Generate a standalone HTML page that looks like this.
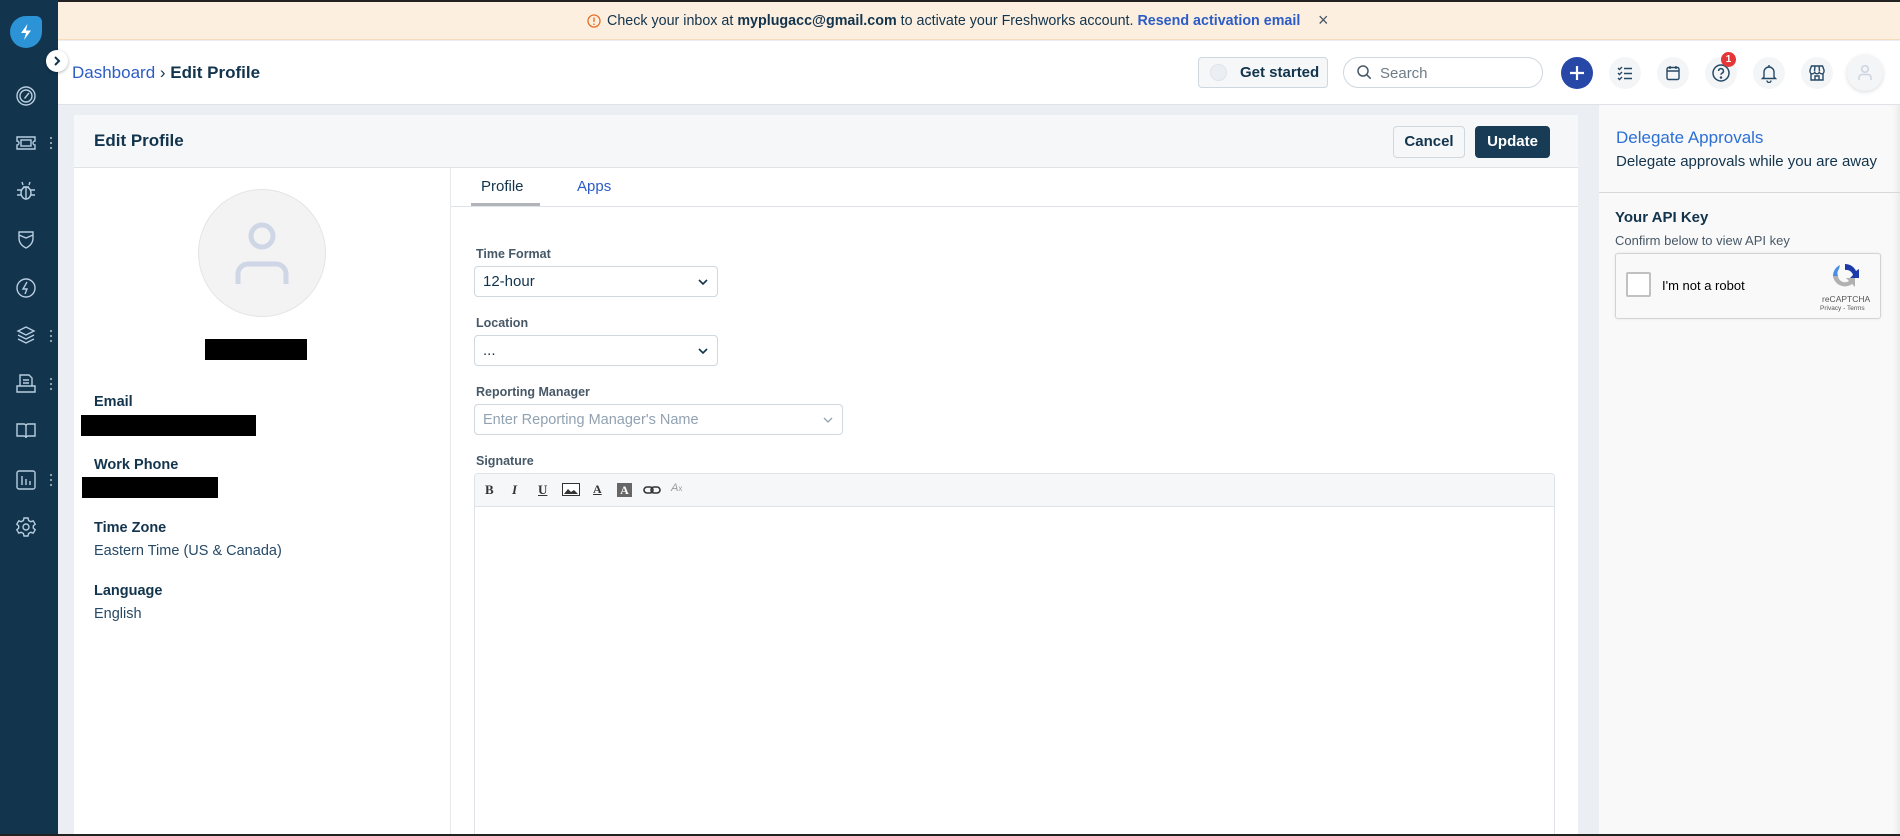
<!DOCTYPE html>
<html><head><meta charset="utf-8"><style>
*{box-sizing:border-box;margin:0;padding:0}
body{width:1900px;height:836px;overflow:hidden;background:#ebeff3;font-family:"Liberation Sans",sans-serif;color:#12344d;position:relative}
.a{position:absolute}
.sb{left:0;top:0;width:58px;height:836px;background:#12344d}
.ic{position:absolute;left:14px;width:24px;height:24px}
.dots{position:absolute;left:50px;width:3px}
.dots i{display:block;width:2px;height:2px;background:#b8c6d3;border-radius:1px;margin-bottom:3px}
.lbl{font-size:14.5px;font-weight:bold;color:#12344d}
.val{font-size:14.5px;color:#264966}
.flbl{font-size:12.5px;font-weight:bold;color:#475867}
.sel{position:absolute;border:1px solid #cfd7df;border-radius:4px;background:#fff;font-size:15px;padding-left:8px;display:flex;align-items:center}
.circ{position:absolute;top:57px;width:32px;height:32px;border-radius:50%;background:#f3f5f7}
.tb{position:absolute;top:482px;font-family:"Liberation Serif",serif;font-size:13px;font-weight:bold;color:#333}
</style></head><body>
<div class="a" style="left:0;top:0;width:1900px;height:2px;background:#222"></div>
<!-- banner -->
<div class="a" style="left:58px;top:2px;width:1842px;height:38px;background:#fdefdf;border-bottom:1px solid #f6dcbc"></div>
<svg class="a" style="left:587px;top:14px" width="14" height="14" viewBox="0 0 14 14"><circle cx="7" cy="7" r="6" fill="none" stroke="#e86f25" stroke-width="1.3"/><path d="M7 3.5v4.5" stroke="#e86f25" stroke-width="1.4"/><circle cx="7" cy="10.2" r=".8" fill="#e86f25"/></svg>
<div class="a" style="left:607px;top:13px;font-size:14.3px;color:#12344d;white-space:nowrap">Check your inbox at <b>myplugacc@gmail.com</b> to activate your Freshworks account. <span style="color:#2c5cc5;font-weight:bold">Resend activation email</span></div>
<div class="a" style="left:1318px;top:10px;font-size:18px;color:#475867">×</div>
<!-- header -->
<div class="a" style="left:58px;top:41px;width:1842px;height:64px;background:#fff;border-bottom:1px solid #dfe3e8"></div>
<div class="a" style="left:72px;top:63px;font-size:17px;color:#2c5cc5">Dashboard <span style="color:#12344d">›</span> <b style="color:#12344d;font-weight:bold">Edit Profile</b></div>
<div class="a" style="left:1198px;top:57px;width:130px;height:31px;border:1px solid #cfd7df;border-radius:4px;background:#f5f7f9"></div>
<div class="a" style="left:1210px;top:64px;width:17px;height:17px;border-radius:50%;background:#ebeff3;border:1px solid #e0e4e8"></div>
<div class="a" style="left:1240px;top:64px;font-size:15px;font-weight:bold">Get started</div>
<div class="a" style="left:1343px;top:57px;width:200px;height:31px;border:1px solid #cfd7df;border-radius:16px;background:#fff"></div>
<svg class="a" style="left:1357px;top:65px" width="15" height="15" viewBox="0 0 15 15"><circle cx="6" cy="6" r="5" fill="none" stroke="#475867" stroke-width="1.5"/><path d="M9.7 9.7l4 4" stroke="#475867" stroke-width="1.5"/></svg>
<div class="a" style="left:1380px;top:65px;font-size:15px;color:#6f7c87">Search</div>
<div class="a" style="left:1561px;top:57px;width:32px;height:32px;border-radius:50%;background:#2848a8"></div>
<svg class="a" style="left:1567px;top:63px" width="20" height="20"><path d="M10 3v14M3 10h14" stroke="#fff" stroke-width="2.2"/></svg>
<div class="circ" style="left:1609px"></div>
<svg class="a" style="left:1616px;top:64px" width="18" height="18" viewBox="0 0 18 18" fill="none" stroke="#264966" stroke-width="1.4"><path d="M2 4l1.5 1.5L6 3M2 9l1.5 1.5L6 8M2 14l1.5 1.5L6 13M8 4.5h8M8 9.5h8M8 14.5h8"/></svg>
<div class="circ" style="left:1657px"></div>
<svg class="a" style="left:1664px;top:64px" width="18" height="18" viewBox="0 0 18 18" fill="none" stroke="#264966" stroke-width="1.4"><rect x="3" y="3.5" width="12" height="12" rx="1.5"/><path d="M3 7h12M6 2v3M12 2v3"/></svg>
<div class="circ" style="left:1705px"></div>
<svg class="a" style="left:1711px;top:63px" width="20" height="20" viewBox="0 0 20 20" fill="none" stroke="#264966" stroke-width="1.5"><circle cx="10" cy="10" r="8"/><path d="M7.6 8a2.4 2.4 0 1 1 3.4 2.2c-.7.4-1 .8-1 1.6"/><circle cx="10" cy="14.5" r=".5" fill="#264966"/></svg>
<div class="a" style="left:1721px;top:52px;width:15px;height:15px;border-radius:50%;background:#e43538;color:#fff;font-size:10px;text-align:center;line-height:15px;font-weight:bold">1</div>
<div class="circ" style="left:1753px"></div>
<svg class="a" style="left:1760px;top:63px" width="18" height="20" viewBox="0 0 18 20" fill="none" stroke="#264966" stroke-width="1.4"><path d="M4 14V9a5 5 0 0 1 10 0v5l1.5 1.5h-13z M7 17.5a2 2 0 0 0 4 0M9 2v2"/></svg>
<div class="circ" style="left:1801px"></div>
<svg class="a" style="left:1807px;top:63px" width="20" height="20" viewBox="0 0 20 20" fill="none" stroke="#264966" stroke-width="1.4"><path d="M3 7l1.5-4h11L17 7v1.5a2.3 2.3 0 0 1-4.7 0a2.3 2.3 0 0 1-4.6 0a2.3 2.3 0 0 1-4.7 0z M4 10v7h12v-7M8 17v-4h4v4M8 3l-.5 5M12 3l.5 5"/></svg>
<div class="a" style="left:1847px;top:55px;width:36px;height:36px;border-radius:50%;background:#f3f5f7;box-shadow:0 1px 4px rgba(0,0,0,.15)"></div>
<svg class="a" style="left:1857px;top:64px" width="16" height="18" viewBox="0 0 16 18" fill="none" stroke="#cdd3e2" stroke-width="1.5"><circle cx="8" cy="5" r="3.3"/><path d="M2 16v-2.5a3 3 0 0 1 3-3h6a3 3 0 0 1 3 3V16"/></svg>
<!-- sidebar -->
<div class="a sb"></div>
<div class="a" style="left:10px;top:16px;width:32px;height:32px;background:#2b93d6;border-radius:16px 6px 16px 16px"></div>
<svg class="a" style="left:16px;top:22px" width="20" height="20" viewBox="0 0 20 20"><path d="M11.5 2L5 11h5l-2 7 7-9.5h-5z" fill="#fff"/></svg>
<div class="a" style="left:46px;top:50px;width:22px;height:22px;border-radius:50%;background:#fff;box-shadow:0 1px 3px rgba(0,0,0,.3)"></div>
<svg class="a" style="left:52px;top:55px" width="10" height="12"><path d="M3 2l4 4-4 4" stroke="#12344d" stroke-width="2" fill="none"/></svg>
<svg class="ic" style="top:84px" viewBox="0 0 24 24" fill="none" stroke="#b8cde0" stroke-width="1.4"><circle cx="12" cy="12" r="9"/><circle cx="12" cy="12" r="6"/><path d="M10.5 14.5L15 9"/></svg>
<svg class="ic" style="top:131px" viewBox="0 0 24 24" fill="none" stroke="#b8cde0" stroke-width="1.4"><path d="M3 6h18v4a2 2 0 0 0 0 4v4H3v-4a2 2 0 0 0 0-4z"/><rect x="7" y="9" width="10" height="6"/></svg>
<div class="dots" style="top:137px"><i></i><i></i><i></i></div>
<svg class="ic" style="top:179px" viewBox="0 0 24 24" fill="none" stroke="#b8cde0" stroke-width="1.4"><ellipse cx="12" cy="14" rx="5" ry="6"/><path d="M9 6l-1-3M15 6l1-3M7 11H3M17 11h4M7 16H3M17 16h4M12 9v11M9 8h6"/></svg>
<svg class="ic" style="top:228px" viewBox="0 0 24 24" fill="none" stroke="#b8cde0" stroke-width="1.4"><path d="M5 4h14v6c0 5-3 8-7 10-4-2-7-5-7-10z M5 7l7 3 7-3"/></svg>
<svg class="ic" style="top:276px" viewBox="0 0 24 24" fill="none" stroke="#b8cde0" stroke-width="1.4"><circle cx="12" cy="12" r="9"/><path d="M13 6l-4 7h4l-2 5"/></svg>
<svg class="ic" style="top:324px" viewBox="0 0 24 24" fill="none" stroke="#b8cde0" stroke-width="1.4"><path d="M12 3l8 4-8 4-8-4z M4 11l8 4 8-4M4 15l8 4 8-4"/></svg>
<div class="dots" style="top:330px"><i></i><i></i><i></i></div>
<svg class="ic" style="top:372px" viewBox="0 0 24 24" fill="none" stroke="#b8cde0" stroke-width="1.4"><path d="M6 14V3h9l3 3v8M9 8h6M9 11h6M3 14h18v6H3z"/></svg>
<div class="dots" style="top:378px"><i></i><i></i><i></i></div>
<svg class="ic" style="top:419px" viewBox="0 0 24 24" fill="none" stroke="#b8cde0" stroke-width="1.4"><path d="M3 5h7a2 2 0 0 1 2 2v12a2 2 0 0 0-2-2H3z M21 5h-7a2 2 0 0 0-2 2v12a2 2 0 0 1 2-2h7z"/></svg>
<svg class="ic" style="top:468px" viewBox="0 0 24 24" fill="none" stroke="#b8cde0" stroke-width="1.4"><rect x="3" y="3" width="18" height="18" rx="2"/><path d="M8 8v9M12 11v6M16 13v4"/></svg>
<div class="dots" style="top:474px"><i></i><i></i><i></i></div>
<svg class="ic" style="top:515px" viewBox="0 0 24 24" fill="none" stroke="#b8cde0" stroke-width="1.4"><circle cx="12" cy="12" r="3"/><path d="M10 3h4l.6 2.5 2.2 1.2 2.4-.9 2 3.4-1.9 1.7v2.2l1.9 1.7-2 3.4-2.4-.9-2.2 1.2L14 21h-4l-.6-2.5-2.2-1.2-2.4.9-2-3.4 1.9-1.7v-2.2L2.8 9.2l2-3.4 2.4.9 2.2-1.2z"/></svg>
<!-- card -->
<div class="a" style="left:74px;top:115px;width:1504px;height:721px;background:#fff"></div>
<div class="a" style="left:74px;top:115px;width:1504px;height:53px;background:#f5f7f9;border-bottom:1px solid #dfe3e8"></div>
<div class="a" style="left:94px;top:131px;font-size:17px;font-weight:bold">Edit Profile</div>
<div class="a" style="left:1393px;top:126px;width:72px;height:32px;border:1px solid #cfd7df;border-radius:4px;background:#f5f7f9;font-size:15px;font-weight:bold;text-align:center;line-height:30px">Cancel</div>
<div class="a" style="left:1475px;top:126px;width:75px;height:32px;border-radius:4px;background:#183b56;color:#fff;font-size:15px;font-weight:bold;text-align:center;line-height:32px">Update</div>
<div class="a" style="left:450px;top:168px;width:1px;height:668px;background:#e6e9ec"></div>
<!-- left col -->
<div class="a" style="left:198px;top:189px;width:128px;height:128px;border-radius:50%;background:#f3f3f3;border:1px solid #e4e4e4"></div>
<svg class="a" style="left:235px;top:222px" width="54" height="62" viewBox="0 0 54 62" fill="none" stroke="#cfd6e5" stroke-width="5"><circle cx="27" cy="14" r="11"/><path d="M3 62V52a10 10 0 0 1 10-10h28a10 10 0 0 1 10 10v10"/></svg>
<div class="a" style="left:205px;top:339px;width:102px;height:21px;background:#000"></div>
<div class="a lbl" style="left:94px;top:394px">Email</div>
<div class="a" style="left:81px;top:415px;width:175px;height:21px;background:#000"></div>
<div class="a lbl" style="left:94px;top:457px">Work Phone</div>
<div class="a" style="left:82px;top:477px;width:136px;height:21px;background:#000"></div>
<div class="a lbl" style="left:94px;top:520px">Time Zone</div>
<div class="a val" style="left:94px;top:543px">Eastern Time (US &amp; Canada)</div>
<div class="a lbl" style="left:94px;top:583px">Language</div>
<div class="a val" style="left:94px;top:606px">English</div>
<!-- tabs -->
<div class="a" style="left:451px;top:206px;width:1127px;height:1px;background:#dfe3e8"></div>
<div class="a" style="left:481px;top:178px;font-size:15px;color:#12344d">Profile</div>
<div class="a" style="left:471px;top:203px;width:69px;height:3px;background:#b1b5b9"></div>
<div class="a" style="left:577px;top:178px;font-size:15px;color:#2c5cc5">Apps</div>
<!-- form -->
<div class="a flbl" style="left:476px;top:247px">Time Format</div>
<div class="sel" style="left:474px;top:266px;width:244px;height:31px">12-hour</div>
<svg class="a" style="left:698px;top:278px" width="10" height="8"><path d="M1 2l4 4 4-4" stroke="#12344d" stroke-width="1.6" fill="none"/></svg>
<div class="a flbl" style="left:476px;top:316px">Location</div>
<div class="sel" style="left:474px;top:335px;width:244px;height:31px">...</div>
<svg class="a" style="left:698px;top:347px" width="10" height="8"><path d="M1 2l4 4 4-4" stroke="#12344d" stroke-width="1.6" fill="none"/></svg>
<div class="a flbl" style="left:476px;top:385px">Reporting Manager</div>
<div class="sel" style="left:474px;top:404px;width:369px;height:31px;color:#92a2b1;font-size:14.5px">Enter Reporting Manager's Name</div>
<svg class="a" style="left:823px;top:416px" width="10" height="8"><path d="M1 2l4 4 4-4" stroke="#92a2b1" stroke-width="1.3" fill="none"/></svg>
<div class="a flbl" style="left:476px;top:454px">Signature</div>
<div class="a" style="left:474px;top:473px;width:1081px;height:363px;border:1px solid #dfe3e8;border-bottom:none;border-radius:4px 4px 0 0"></div>
<div class="a" style="left:475px;top:474px;width:1079px;height:33px;background:#f5f7f9;border-bottom:1px solid #dfe3e8;border-radius:4px 4px 0 0"></div>
<div class="tb" style="left:485px">B</div>
<div class="tb" style="left:512px;font-style:italic">I</div>
<div class="tb" style="left:538px;text-decoration:underline">U</div>
<svg class="a" style="left:562px;top:483px" width="18" height="13"><rect x=".5" y=".5" width="17" height="12" fill="#fff" stroke="#333"/><path d="M2 11l4-5 3 3 3-2 4 4z" fill="#333"/></svg>
<div class="tb" style="left:593px;text-decoration:underline;font-size:12px">A</div>
<div class="a" style="left:617px;top:483px;width:15px;height:14px;background:#666;color:#fff;font-family:'Liberation Serif',serif;font-weight:bold;font-size:12px;text-align:center;line-height:14px">A</div>
<svg class="a" style="left:643px;top:485px" width="18" height="12"><rect x="1" y="2" width="9" height="6" rx="3" fill="none" stroke="#333" stroke-width="1.6"/><rect x="8" y="2" width="9" height="6" rx="3" fill="none" stroke="#333" stroke-width="1.6"/></svg>
<div class="a" style="left:671px;top:482px;font-size:11px;color:#999;font-style:italic">A<span style="font-size:8px;font-style:normal">x</span></div>
<!-- right panel -->
<div class="a" style="left:1599px;top:105px;width:301px;height:731px;background:#f9f9f9;box-shadow:inset -8px 0 8px -6px rgba(0,0,0,.08)"></div>
<div class="a" style="left:1616px;top:128px;font-size:17px;color:#2c6fd5">Delegate Approvals</div>
<div class="a" style="left:1616px;top:153px;font-size:15px;color:#12344d">Delegate approvals while you are away</div>
<div class="a" style="left:1599px;top:192px;width:301px;height:1px;background:#d6d9dc"></div>
<div class="a" style="left:1615px;top:209px;font-size:15px;font-weight:bold">Your API Key</div>
<div class="a" style="left:1615px;top:233px;font-size:13px;color:#475867">Confirm below to view API key</div>
<div class="a" style="left:1615px;top:253px;width:266px;height:66px;background:#f9f9f9;border:1px solid #d3d3d3;border-radius:3px;box-shadow:0 0 3px rgba(0,0,0,.08)"></div>
<div class="a" style="left:1626px;top:272px;width:25px;height:25px;background:#fff;border:2px solid #c1c1c1;border-radius:2px"></div>
<div class="a" style="left:1662px;top:278px;font-size:13px;color:#000">I'm not a robot</div>
<svg class="a" style="left:1831px;top:262px" width="28" height="28" viewBox="0 0 28 28"><path d="M14 2a12 12 0 0 1 11 7l3-2v9h-9l3-3a7 7 0 0 0-8-5z" fill="#1c3aa9"/><path d="M2 14A12 12 0 0 1 9 3l-1 4a7 7 0 0 0-1 7H2z" fill="#4a90e2"/><path d="M2 14h5a7 7 0 0 0 11 5l-3-3h9v9l-3-3A12 12 0 0 1 2 14z" fill="#b1b1b1"/></svg>
<div class="a" style="left:1822px;top:294px;font-size:8.5px;color:#555">reCAPTCHA</div>
<div class="a" style="left:1820px;top:305px;font-size:6.5px;color:#555">Privacy - Terms</div>
<div class="a" style="left:0;top:834px;width:1900px;height:2px;background:#222"></div>
</body></html>
